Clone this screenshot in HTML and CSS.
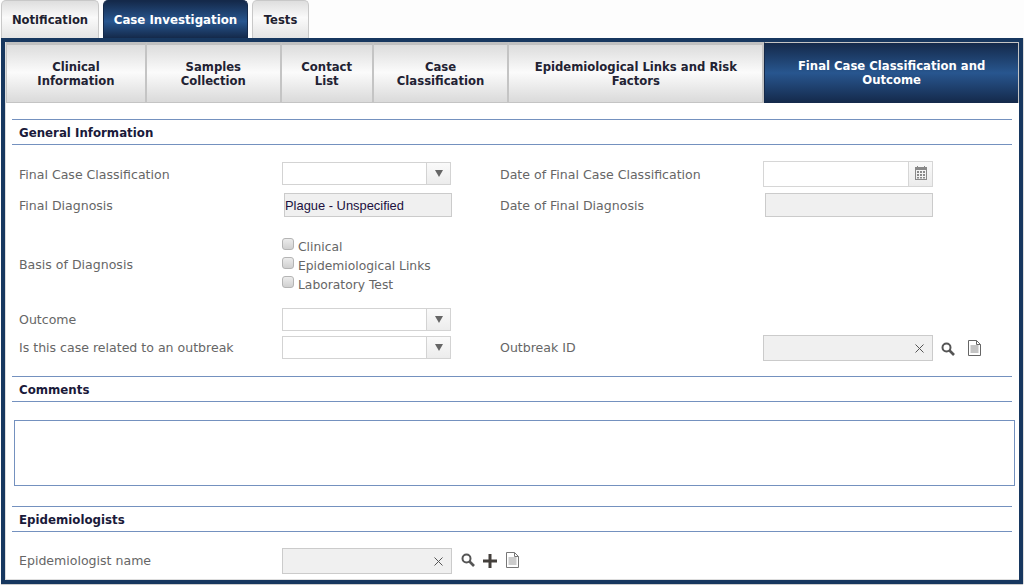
FILE: index.html
```html
<!DOCTYPE html>
<html lang="en">
<head>
<meta charset="utf-8">
<title>Case Investigation</title>
<link rel="stylesheet" href="styles.css">
</head>
<body>
<nav class="top-tabs">
  <div class="top-tab tab-notification">Notification</div>
  <div class="top-tab top-tab-active tab-case">Case Investigation</div>
  <div class="top-tab tab-tests">Tests</div>
</nav>
<main class="panel">
  <div class="sub-tabs">
    <div class="sub-tab st1">Clinical<br>Information</div>
    <div class="sub-tab st2">Samples<br>Collection</div>
    <div class="sub-tab st3">Contact<br>List</div>
    <div class="sub-tab st4">Case<br>Classification</div>
    <div class="sub-tab st5">Epidemiological Links and Risk<br>Factors</div>
    <div class="sub-tab sub-tab-active st6">Final Case Classification and<br>Outcome</div>
  </div>

  <h2 class="section-head head-general">General Information</h2>
  <div class="form-grid">
    <label class="lbl r1">Final Case Classification</label>
    <div class="select r1"><span class="select-btn"><span class="caret"></span></span></div>
    <label class="lbl r1">Date of Final Case Classification</label>
    <div class="date r1"><span class="date-btn">
      <svg width="12" height="14" viewBox="0 0 12 14"><path fill="#8a8a8a" d="M0 1h2V0h1v1h6V0h1v1h2v13H0zM1 4v9h10V4z"/><path fill="#8a8a8a" d="M2 5h2v2H2zM5 5h2v2H5zM8 5h2v2H8zM2 8h2v2H2zM5 8h2v2H5zM8 8h2v2H8zM2 11h2v1.500H2zM5 11h2v1.500H5zM8 11h2v1.500H8z"/></svg>
    </span></div>

    <label class="lbl r2">Final Diagnosis</label>
    <div class="readonly r2 value">Plague - Unspecified</div>
    <label class="lbl r2">Date of Final Diagnosis</label>
    <div class="readonly r2"></div>

    <label class="lbl r3 lbl-basis">Basis of Diagnosis</label>
    <div class="checks r3">
      <div class="check"><span class="box"></span>Clinical</div>
      <div class="check"><span class="box"></span>Epidemiological Links</div>
      <div class="check"><span class="box"></span>Laboratory Test</div>
    </div>
    <span class="r3 filler"></span>

    <label class="lbl r4">Outcome</label>
    <div class="select r4"><span class="select-btn"><span class="caret"></span></span></div>
    <span class="r4 filler"></span>

    <label class="lbl lbl-up">Is this case related to an outbreak</label>
    <div class="select select-low"><span class="select-btn"><span class="caret"></span></span></div>
    <label class="lbl lbl-up">Outbreak ID</label>
    <div class="lookup-wrap">
      <div class="lookup"><span class="clear">
        <svg width="9" height="9" viewBox="0 0 9 9"><path d="M.5.500l8 8M8.500.500l-8 8" stroke="#555" stroke-width="1" fill="none"/></svg>
      </span></div>
      <svg class="ic ic-search" width="14" height="14" viewBox="0 0 14 14"><circle cx="5.500" cy="5.500" r="4" fill="none" stroke="#555" stroke-width="2"/><path d="M8.500 8.500l4.500 4.500" stroke="#555" stroke-width="2.600"/></svg>
      <svg class="ic ic-doc" width="15" height="16" viewBox="0 0 15 16"><path d="M1.500.500h8l4 4v11h-12z" fill="#fff" stroke="#666"/><path d="M9.500.500v4h4" fill="none" stroke="#666"/><path d="M3.500 6h8M3.500 8h8M3.500 10h8M3.500 12h8" stroke="#888"/></svg>
    </div>
  </div>

  <h2 class="section-head head-comments">Comments</h2>
  <div class="comments"></div>

  <h2 class="section-head head-epi">Epidemiologists</h2>
  <div class="form-grid epi-row">
    <label class="lbl lbl-up">Epidemiologist name</label>
    <div class="lookup-wrap wide">
      <div class="lookup"><span class="clear">
        <svg width="9" height="9" viewBox="0 0 9 9"><path d="M.5.500l8 8M8.500.500l-8 8" stroke="#555" stroke-width="1" fill="none"/></svg>
      </span></div>
      <svg class="ic ic-search-b" width="14" height="14" viewBox="0 0 14 14"><circle cx="5.500" cy="5.500" r="4" fill="none" stroke="#555" stroke-width="2"/><path d="M8.500 8.500l4.500 4.500" stroke="#555" stroke-width="2.600"/></svg>
      <svg class="ic ic-plus" width="14" height="14" viewBox="0 0 14 14"><path d="M0 5.500h5.500V0h3v5.500H14v3H8.500V14h-3V8.500H0z" fill="#44403c"/></svg>
      <svg class="ic ic-doc-b" width="15" height="16" viewBox="0 0 15 16"><path d="M1.500.500h8l4 4v11h-12z" fill="#fff" stroke="#777"/><path d="M9.500.500v4h4" fill="none" stroke="#777"/><path d="M3.500 6h8M3.500 8h8M3.500 10h8M3.500 12h8" stroke="#999"/></svg>
    </div>
  </div>
</main>
</body>
</html>
```

FILE: styles.css
```css
* { box-sizing: border-box; }
html, body { margin: 0; padding: 0; }
body {
  width: 1024px;
  height: 585px;
  overflow: hidden;
  background: #fdfdfd;
  font-family: "DejaVu Sans", Verdana, sans-serif;
  font-size: 12px;
  color: #666;
}

/* top tabs */
.top-tabs {
  display: flex;
  gap: 4px;
  height: 38px;
  padding-left: 1px;
}
.top-tab {
  display: flex;
  align-items: center;
  justify-content: center;
  height: 38px;
  border: 1px solid #c8c8c8;
  border-bottom: 0;
  border-radius: 5px 5px 0 0;
  background: linear-gradient(#dedede 0, #fafafa 45%, #e4e4e4 100%);
  color: #1f1f30;
  font-weight: bold;
  font-size: 11.600px;
}
.tab-notification { width: 98px; }
.tab-case { width: 145px; font-size: 11.800px; }
.tab-tests { width: 57px; }
.top-tab-active {
  border-color: #14294a;
  background: linear-gradient(#14294a 0, #28568f 55%, #14294a 100%);
  color: #fff;
}

/* main panel */
.panel {
  width: 1022px;
  height: 546px;
  margin-left: 1px;
  border: 4px solid #17375f;
  background: #fff;
  box-shadow: 0 1px 0 #ccc, 1px 0 0 #ddd, inset 1px 0 0 #ddd, inset 0 -1px 0 #ddd;
}
.sub-tabs {
  display: flex;
  height: 61px;
  padding-left: 1px;
}
.sub-tab {
  display: flex;
  align-items: center;
  justify-content: center;
  text-align: center;
  height: 61px;
  line-height: 14px;
  border-bottom: 1px solid #c4c4c4;
  border-top: 3px solid #c0c0c0;
  border-right: 2px solid #c4c4c4;
  background: linear-gradient(#dcdcdc 0, #fbfbfb 48%, #dadada 100%);
  color: #222233;
  font-weight: bold;
  font-size: 11.650px;
}
.st1 { width: 141px; border-left: 1px solid #c4c4c4; }
.st2 { width: 135px; }
.st3 { width: 92px; }
.st4 { width: 136px; }
.st5 { width: 255px; }
.st6 { width: 255px; }
.sub-tab-active {
  border: 1px solid #c4c4c4;
  border-bottom: 0;
  border-left-color: #14294a;
  background: linear-gradient(#14294a 0, #28568f 50%, #14294a 100%);
  color: #fff;
}

/* section headings */
.section-head {
  margin: 0 0 0 7px;
  width: 1000px;
  height: 26px;
  padding: 1px 0 0 7px;
  border-top: 1px solid #7491bf;
  border-bottom: 1px solid #7491bf;
  line-height: 25px;
  font-size: 11.800px;
  font-weight: bold;
  color: #1a1a3a;
}
.head-general { margin-top: 16px; }
.head-comments { margin-top: 15px; }
.head-epi { margin-top: 20px; }

/* form */
.form-grid {
  display: grid;
  grid-template-columns: 263px 218px 263px 1fr;
  margin: 16px 0 0 14px;
}
.lbl { display: flex; align-items: center; font-size: 12.550px; color: #666; }
.lbl-basis { padding-bottom: 3px; }
.lbl-up { padding-bottom: 2px; }
.r1 { margin-bottom: 6px; }
.r2 { margin-bottom: 20px; }
.r3 { margin-bottom: 14px; }
.r4 { margin-bottom: 4px; }
.filler { grid-column: span 2; }

.select {
  display: flex;
  justify-content: flex-end;
  width: 169px;
  height: 23px;
  margin-top: 1px;
  border: 1px solid #d3d3d3;
  background: #fff;
}
.select.r4 { margin-top: 0; }
.select-btn {
  display: flex;
  align-items: center;
  justify-content: center;
  width: 24px;
  border-left: 1px solid #d3d3d3;
  background: linear-gradient(#fafafa, #ececec);
}
.caret {
  width: 0;
  height: 0;
  border-left: 4px solid transparent;
  border-right: 4px solid transparent;
  border-top: 7px solid #666;
}
.date {
  display: flex;
  justify-content: flex-end;
  width: 170px;
  height: 26px;
  border: 1px solid #d6d6d6;
  background: #fff;
}
.date-btn {
  display: flex;
  align-items: center;
  justify-content: center;
  width: 24px;
  padding-bottom: 3px;
  border-left: 1px solid #d6d6d6;
  background: linear-gradient(#fafafa, #ececec);
}
.readonly {
  width: 168px;
  height: 24px;
  margin-left: 2px;
  border: 1px solid #cbcbcb;
  background: #f0f0f0;
}
.value {
  line-height: 23px;
  font-family: "Liberation Sans", Arial, sans-serif;
  font-size: 12.900px;
  color: #20103f;
}
.checks { display: flex; flex-direction: column; }
.check { display: flex; align-items: flex-start; height: 19px; line-height: 20px; font-size: 12.300px; white-space: nowrap; }
.box {
  width: 12px;
  height: 12px;
  margin: 1px 4px 0 0;
  border: 1px solid #b4b4b4;
  border-radius: 3px;
  background: linear-gradient(#ececec, #d0d0d0);
}
.lookup-wrap { display: flex; align-items: center; }
.wide { grid-column: span 3; }
.lookup {
  display: flex;
  flex: none;
  align-items: center;
  justify-content: flex-end;
  width: 170px;
  height: 26px;
  padding-right: 8px;
  border: 1px solid #cbcbcb;
  background: #f0f0f0;
}
.clear { display: flex; }
.ic { flex: none; }
.ic-search { margin: 2px 0 0 8px; }
.ic-doc { margin-left: 12px; }
.ic-search-b { margin: -3px 0 0 9px; }
.ic-plus { margin-left: 8px; }
.ic-doc-b { margin: -3px 0 0 8px; }

.comments {
  width: 1001px;
  height: 66px;
  margin: 18px 0 0 9px;
  border: 1px solid #7491bf;
  background: #fff;
}
.epi-row { margin-top: 16px; }
```
